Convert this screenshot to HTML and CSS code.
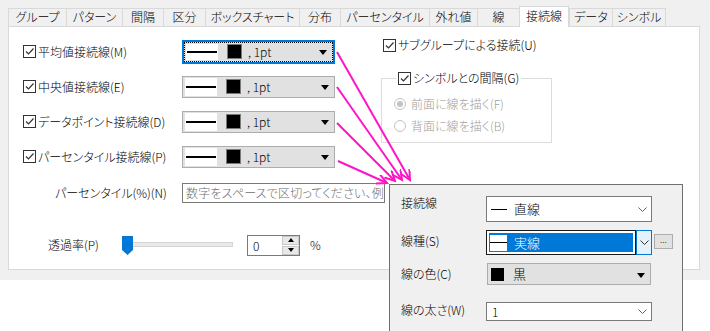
FILE: index.html
```html
<!DOCTYPE html>
<html lang="ja">
<head>
<meta charset="utf-8">
<link rel="stylesheet" href="styles.css">
</head>
<body>
<div class="dialog">
  <div class="tabs">
    <div class="tab">グループ</div>
    <div class="tab">パターン</div>
    <div class="tab">間隔</div>
    <div class="tab">区分</div>
    <div class="tab">ボックスチャート</div>
    <div class="tab">分布</div>
    <div class="tab">パーセンタイル</div>
    <div class="tab">外れ値</div>
    <div class="tab">線</div>
    <div class="tab sel">接続線</div>
    <div class="tab">データ</div>
    <div class="tab last">シンボル</div>
  </div>
  <div class="panel">
    <div class="top">
      <div class="left">
        <div class="row">
          <label class="chk"><span class="box"><svg viewBox="0 0 11 11" width="11" height="11"><path d="M2 5.5 L4.5 8 L9.5 2.5" fill="none" stroke="#333" stroke-width="1.2"/></svg></span>平均値接続線(M)</label>
          <div class="lcombo focus"><div class="lin"><span class="sample"><i></i></span><span class="sw"></span><span class="pt">, 1pt</span><span class="tri"></span></div></div>
        </div>
        <div class="row">
          <label class="chk"><span class="box"><svg viewBox="0 0 11 11" width="11" height="11"><path d="M2 5.5 L4.5 8 L9.5 2.5" fill="none" stroke="#333" stroke-width="1.2"/></svg></span>中央値接続線(E)</label>
          <div class="lcombo"><div class="lin"><span class="sample"><i></i></span><span class="sw"></span><span class="pt">, 1pt</span><span class="tri"></span></div></div>
        </div>
        <div class="row">
          <label class="chk"><span class="box"><svg viewBox="0 0 11 11" width="11" height="11"><path d="M2 5.5 L4.5 8 L9.5 2.5" fill="none" stroke="#333" stroke-width="1.2"/></svg></span>データポイント接続線(D)</label>
          <div class="lcombo"><div class="lin"><span class="sample"><i></i></span><span class="sw"></span><span class="pt">, 1pt</span><span class="tri"></span></div></div>
        </div>
        <div class="row">
          <label class="chk"><span class="box"><svg viewBox="0 0 11 11" width="11" height="11"><path d="M2 5.5 L4.5 8 L9.5 2.5" fill="none" stroke="#333" stroke-width="1.2"/></svg></span>パーセンタイル接続線(P)</label>
          <div class="lcombo"><div class="lin"><span class="sample"><i></i></span><span class="sw"></span><span class="pt">, 1pt</span><span class="tri"></span></div></div>
        </div>
      </div>
      <div class="right">
        <label class="chk sub"><span class="box"><svg viewBox="0 0 11 11" width="11" height="11"><path d="M2 5.5 L4.5 8 L9.5 2.5" fill="none" stroke="#333" stroke-width="1.2"/></svg></span>サブグループによる接続(U)</label>
        <fieldset class="group">
          <legend><label class="chk"><span class="box"><svg viewBox="0 0 11 11" width="11" height="11"><path d="M2 5.5 L4.5 8 L9.5 2.5" fill="none" stroke="#333" stroke-width="1.2"/></svg></span>シンボルとの間隔(G)</label></legend>
          <div class="radios">
            <div class="radio"><span class="rc on"></span>前面に線を描く(F)</div>
            <div class="radio"><span class="rc"></span>背面に線を描く(B)</div>
          </div>
        </fieldset>
      </div>
    </div>
    <div class="pct">
      <span class="pct-label">パーセンタイル(%)(N)</span>
      <div class="textbox">数字をスペースで区切ってください、例</div>
    </div>
    <div class="trans">
      <span class="trans-label">透過率(P)</span>
      <div class="slider">
        <div class="track"></div>
        <svg class="thumb" viewBox="0 0 11 19" width="11" height="19"><path d="M0 0 H11 V14 L5.5 19 L0 14 Z" fill="#0078d7"/></svg>
      </div>
      <div class="spin">
        <div class="spin-field">0</div>
        <div class="spin-btns">
          <div class="sb"><span class="up"></span></div>
          <div class="sb"><span class="dn"></span></div>
        </div>
      </div>
      <span class="pcent">%</span>
    </div>
  </div>
</div>

<div class="popup">
  <div class="prow r1">
    <span class="plabel">接続線</span>
    <div class="pc white"><span class="dash"></span><span class="ptext">直線</span><svg class="chev" viewBox="0 0 9 5" width="9" height="5"><path d="M0.5 0.5 L4.5 4.5 L8.5 0.5" fill="none" stroke="#606060" stroke-width="1"/></svg></div>
  </div>
  <div class="prow r2">
    <span class="plabel">線種(S)</span>
    <div class="pc2">
      <div class="pc2-field"><div class="hl"><span class="lbox"><i></i></span><span class="ptext">実線</span></div></div>
      <div class="pc2-btn"><svg viewBox="0 0 9 5" width="9" height="5"><path d="M0.5 0.5 L4.5 4.5 L8.5 0.5" fill="none" stroke="#333" stroke-width="1"/></svg></div>
    </div>
    <div class="more">...</div>
  </div>
  <div class="prow r3">
    <span class="plabel">線の色(C)</span>
    <div class="pc gray"><span class="blk"></span><span class="ptext">黒</span><span class="tri"></span></div>
  </div>
  <div class="prow r4">
    <span class="plabel">線の太さ(W)</span>
    <div class="pc white small"><span class="one">1</span><svg class="chev" viewBox="0 0 9 5" width="9" height="5"><path d="M0.5 0.5 L4.5 4.5 L8.5 0.5" fill="none" stroke="#606060" stroke-width="1"/></svg></div>
  </div>
</div>

<svg class="arrows" viewBox="0 0 710 331" width="710" height="331">
  <defs>
    <marker id="ah" markerWidth="12" markerHeight="12" refX="10" refY="5" orient="auto" markerUnits="userSpaceOnUse">
      <path d="M0 0 L10 5 L0 10" fill="none" stroke="#ff14c8" stroke-width="2"/>
    </marker>
  </defs>
  <g stroke="#ff14c8" stroke-width="2" fill="none" marker-end="url(#ah)">
    <line x1="337" y1="52" x2="410" y2="180"/>
    <line x1="337" y1="87" x2="402" y2="180"/>
    <line x1="337" y1="123" x2="395" y2="181"/>
    <line x1="338" y1="161" x2="387" y2="183"/>
  </g>
</svg>
</body>
</html>
```

FILE: styles.css
```css
* { box-sizing: border-box; }
html, body { margin: 0; padding: 0; }
body {
  width: 710px;
  height: 331px;
  position: relative;
  overflow: hidden;
  background: #fff;
  color: #000;
  font-family: "Noto Sans CJK JP", "Noto Sans", sans-serif;
  font-size: 12px;
  font-weight: 300;
  line-height: 16px;
  font-feature-settings: "palt";
}
.dialog {
  height: 280px;
  background: #f0f0f0;
  padding: 6px 10px 0 8px;
}
.tabs {
  display: grid;
  grid-template-columns: 58px 56px 41px 42px 94px 41px 89px 48px 42px 50px 43px 54px;
  height: 20px;
  align-items: end;
  position: relative;
  z-index: 1;
}
.tab {
  height: 18px;
  border: 1px solid #d9d9d9;
  border-right: none;
  border-bottom: none;
  background: #f0f0f0;
  text-align: center;
  line-height: 16px;
  white-space: nowrap;
}
.tab.last { border-right: 1px solid #d9d9d9; }
.tab.sel {
  height: 21px;
  margin-bottom: -1px;
  background: #fff;
  border-right: 1px solid #d9d9d9;
  line-height: 17px;
}
.panel {
  height: 244px;
  background: #fff;
  border: 1px solid #d9d9d9;
}
.top { display: flex; padding-top: 7px; }
.left { padding-left: 14px; }
.row { display: flex; align-items: center; height: 35px; }
.chk { display: flex; align-items: center; gap: 2px; white-space: nowrap; }
.row .chk { width: 159px; }
.box {
  width: 13px; height: 13px;
  border: 1px solid #333;
  background: #fff;
  display: flex;
  flex: none;
}
.lcombo {
  width: 153px;
  height: 22px;
  background: #e1e1e1;
  border: 1px solid #adadad;
  display: flex;
}
.lcombo.focus {
  height: 24px;
  border: 2px solid #0078d7;
}
.lin {
  flex: 1;
  display: flex;
  align-items: center;
  padding: 1px 0 1px 2px;
}
.lcombo.focus .lin { border: 1px dotted #000; padding: 1px 0 1px 1px; }
.sample {
  width: 32px;
  align-self: stretch;
  background: #fff;
  display: flex;
  align-items: center;
}
.sample i { display: block; width: 100%; height: 2px; background: #000; margin: 0 1px; }
.sw {
  width: 15px; height: 15px;
  background: #000;
  border: 1px solid #7a7a7a;
  margin-left: 9px;
}
.pt { margin-left: 6px; flex: 1; }
.tri {
  width: 0; height: 0;
  border-left: 4px solid transparent;
  border-right: 4px solid transparent;
  border-top: 5px solid #000;
  margin-right: 5px;
  margin-top: 2px;
}
.right { margin-left: 48px; }
.right > .chk.sub { height: 22px; }
.group {
  border: 1px solid #dcdcdc;
  margin: 14px 0 0 -2px;
  padding: 0 0 0 12px;
  width: 171px;
  height: 73px;
}
.group legend { padding: 0 2px; margin-left: 2px; }
.radios { padding-top: 7px; }
.radio {
  display: flex;
  align-items: center;
  gap: 5px;
  height: 22px;
  color: #a0a0a0;
  white-space: nowrap;
}
.rc {
  width: 12px; height: 12px;
  border-radius: 50%;
  border: 1px solid #c4c4c4;
  background: #fff;
  display: flex;
  align-items: center;
  justify-content: center;
}
.rc.on::after {
  content: "";
  width: 6px; height: 6px;
  border-radius: 50%;
  background: #c4c4c4;
}
.pct {
  display: flex;
  align-items: center;
  margin-top: 9px;
  padding-left: 46px;
  height: 20px;
}
.pct-label { width: 127px; white-space: nowrap; }
.textbox {
  width: 203px;
  height: 20px;
  border: 1px solid #7a7a7a;
  color: #6d6d6d;
  padding-left: 3px;
  white-space: nowrap;
  overflow: hidden;
  line-height: 18px;
  letter-spacing: 0.2px;
}
.trans {
  display: flex;
  align-items: center;
  margin-top: 31px;
  padding-left: 39px;
  height: 22px;
}
.trans-label { width: 74px; white-space: nowrap; }
.slider { position: relative; width: 111px; height: 19px; margin-right: 14px; }
.track {
  position: absolute;
  left: 0; right: 0; top: 6px;
  height: 5px;
  background: #e7eaea;
  border: 1px solid #d6d6d6;
}
.thumb { position: relative; display: block; }
.spin {
  width: 53px; height: 21px;
  border: 1px solid #7a7a7a;
  display: flex;
  background: #fff;
}
.spin-field { flex: 1; padding-left: 5px; line-height: 19px; }
.spin-btns { width: 17px; display: flex; flex-direction: column; gap: 1px; background: #fff; }
.sb {
  flex: 1;
  background: #e8e8e8;
  border: 1px solid #c8c8c8;
  display: flex;
  align-items: center;
  justify-content: center;
}
.up, .dn { width: 0; height: 0; border-left: 3px solid transparent; border-right: 3px solid transparent; }
.up { border-bottom: 4px solid #000; }
.dn { border-top: 4px solid #000; }
.pcent { margin-left: 10px; }

.popup {
  position: absolute;
  left: 389px;
  top: 184px;
  width: 294px;
  height: 160px;
  background: #f0f0f0;
  border: 1px solid #6f6f6f;
  padding: 11px 0 0 11px;
  z-index: 2;
}
.prow { display: flex; align-items: center; }
.plabel { width: 85px; white-space: nowrap; }
.r1 { height: 26px; }
.r1 .plabel { margin-bottom: 12px; }
.r2 { height: 25px; margin-top: 8px; }
.r2 .plabel { margin-bottom: 4px; }
.r3 { height: 22px; margin-top: 8px; }
.r4 { height: 19px; margin-top: 17px; }
.r4 .plabel { margin-bottom: 4px; }
.pc {
  width: 166px;
  height: 26px;
  display: flex;
  align-items: center;
  border: 1px solid #7a7a7a;
}
.pc.white { background: #fff; }
.pc.small { height: 19px; }
.pc.gray {
  width: 164px;
  height: 22px;
  margin-left: 1px;
  background: #e1e1e1;
  border-color: #adadad;
  padding-left: 3px;
}
.dash { width: 16px; height: 1px; background: #000; margin-left: 4px; }
.ptext { margin-left: 7px; flex: 1; font-size: 13px; }
.chev { margin-right: 4px; }
.one { margin-left: 5px; flex: 1; }
.blk { width: 13px; height: 13px; background: #000; }
.pc.gray .ptext { margin-left: 9px; }
.pc.gray .tri { margin-right: 5px; }
.pc2 { display: flex; height: 25px; }
.pc2-field {
  width: 150px;
  border: 1px solid #1a1a1a;
  background: #fff;
  padding: 2px;
}
.hl {
  height: 100%;
  background: #0078d7;
  display: flex;
  align-items: center;
  color: #fff;
  padding-left: 1px;
}
.lbox {
  width: 17px; height: 16px;
  background: #fff;
  display: flex;
  align-items: center;
}
.lbox i { display: block; width: 100%; height: 1px; background: #000; }
.hl .ptext { margin-left: 7px; }
.pc2-btn {
  width: 16px;
  background: #e5f1fb;
  border: 1px solid #0078d7;
  display: flex;
  align-items: center;
  justify-content: center;
}
.more {
  width: 19px; height: 15px;
  margin-left: 2px;
  margin-bottom: 3px;
  background: #e1e1e1;
  border: 1px solid #adadad;
  font-size: 9px;
  line-height: 9px;
  text-align: center;
}
.arrows { position: absolute; left: 0; top: 0; z-index: 3; pointer-events: none; }
```
